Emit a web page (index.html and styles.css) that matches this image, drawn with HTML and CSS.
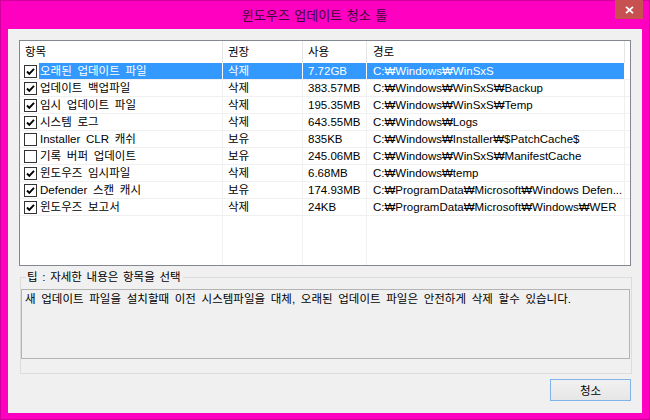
FILE: index.html
```html
<!DOCTYPE html>
<html lang="ko">
<head>
<meta charset="utf-8">
<title>윈도우즈 업데이트 청소 툴</title>
<link rel="stylesheet" href="styles.css">
</head>
<body>
<div class="window">
  <div class="titlebar">
    <div class="title">윈도우즈 업데이트 청소 툴</div>
    <div class="close">
      <svg width="9" height="8" viewBox="0 0 9 8"><path d="M1 0.8 L8 7.2 M8 0.8 L1 7.2" stroke="#fff" stroke-width="1.8" fill="none"/></svg>
    </div>
  </div>
  <div class="client">
    <div class="listview">
      <div class="row header">
        <div class="c c1">항목</div>
        <div class="c c2">권장</div>
        <div class="c c3">사용</div>
        <div class="c c4">경로</div>
      </div>
      <div class="body">
        <div class="row sel">
          <div class="c c1"><span class="cb on"></span><span class="lbl">오래된 업데이트 파일</span></div>
          <div class="c c2">삭제</div>
          <div class="c c3">7.72GB</div>
          <div class="c c4">C:₩Windows₩WinSxS</div>
        </div>
        <div class="row">
          <div class="c c1"><span class="cb on"></span><span class="lbl">업데이트 백업파일</span></div>
          <div class="c c2">삭제</div>
          <div class="c c3">383.57MB</div>
          <div class="c c4">C:₩Windows₩WinSxS₩Backup</div>
        </div>
        <div class="row">
          <div class="c c1"><span class="cb on"></span><span class="lbl">임시 업데이트 파일</span></div>
          <div class="c c2">삭제</div>
          <div class="c c3">195.35MB</div>
          <div class="c c4">C:₩Windows₩WinSxS₩Temp</div>
        </div>
        <div class="row">
          <div class="c c1"><span class="cb on"></span><span class="lbl">시스템 로그</span></div>
          <div class="c c2">삭제</div>
          <div class="c c3">643.55MB</div>
          <div class="c c4">C:₩Windows₩Logs</div>
        </div>
        <div class="row">
          <div class="c c1"><span class="cb"></span><span class="lbl">Installer CLR 캐쉬</span></div>
          <div class="c c2">보유</div>
          <div class="c c3">835KB</div>
          <div class="c c4">C:₩Windows₩Installer₩$PatchCache$</div>
        </div>
        <div class="row">
          <div class="c c1"><span class="cb"></span><span class="lbl">기록 버퍼 업데이트</span></div>
          <div class="c c2">보유</div>
          <div class="c c3">245.06MB</div>
          <div class="c c4">C:₩Windows₩WinSxS₩ManifestCache</div>
        </div>
        <div class="row">
          <div class="c c1"><span class="cb on"></span><span class="lbl">윈도우즈 임시파일</span></div>
          <div class="c c2">삭제</div>
          <div class="c c3">6.68MB</div>
          <div class="c c4">C:₩Windows₩temp</div>
        </div>
        <div class="row">
          <div class="c c1"><span class="cb on"></span><span class="lbl">Defender 스캔 캐시</span></div>
          <div class="c c2">보유</div>
          <div class="c c3">174.93MB</div>
          <div class="c c4">C:₩ProgramData₩Microsoft₩Windows Defen...</div>
        </div>
        <div class="row">
          <div class="c c1"><span class="cb on"></span><span class="lbl">윈도우즈 보고서</span></div>
          <div class="c c2">삭제</div>
          <div class="c c3">24KB</div>
          <div class="c c4">C:₩ProgramData₩Microsoft₩Windows₩WER</div>
        </div>
      </div>
    </div>
    <div class="group">
      <div class="legend">팁 : 자세한 내용은 항목을 선택</div>
      <div class="desc">새 업데이트 파일을 설치할때 이전 시스템파일을 대체, 오래된 업데이트 파일은 안전하게 삭제 할수 있습니다.</div>
    </div>
    <div class="actions">
      <button class="btn">청소</button>
    </div>
  </div>
</div>
</body>
</html>
```

FILE: styles.css
```css
html, body {
  margin: 0;
  padding: 0;
}
body {
  width: 650px;
  height: 420px;
  overflow: hidden;
  font-family: "Liberation Sans", "Noto Sans CJK KR", sans-serif;
  font-size: 11.5px;
  word-spacing: 2.5px;
  color: #000;
}
.window {
  box-sizing: border-box;
  width: 650px;
  height: 420px;
  border: 1px solid #d0009c;
  background: #ff00c0;
  display: flex;
  flex-direction: column;
}
.titlebar {
  height: 28px;
  display: flex;
  align-items: flex-start;
  flex: none;
}
.title {
  flex: 1;
  text-align: center;
  padding-left: 13px;
  font-family: "Noto Sans CJK KR", sans-serif;
  font-size: 13px;
  line-height: 28px;
  color: #3e0a36;
  word-spacing: 1px;
}
.close {
  width: 28px;
  height: 19px;
  margin-top: -1px;
  margin-right: 6px;
  background: #c75050;
  display: flex;
  align-items: center;
  justify-content: center;
}
.close svg { display: block; }
.client {
  flex: none;
  height: 384px;
  margin: 0 7px 0 7px;
  box-sizing: border-box;
  background: #f0f0f0;
  padding: 11px 11px 0 11px;
  display: flex;
  flex-direction: column;
}
.listview {
  box-sizing: border-box;
  height: 226px;
  border: 1px solid #828790;
  background: #fff;
  display: flex;
  flex-direction: column;
  flex: none;
}
.row {
  display: flex;
  height: 17px;
  box-sizing: border-box;
  border-bottom: 1px solid #f0f0f0;
  line-height: 16px;
}
.row.header {
  height: 22px;
  line-height: 22px;
  border-bottom: none;
  flex: none;
}
.c {
  box-sizing: border-box;
  border-right: 1px solid #e5e5e5;
  white-space: nowrap;
  overflow: hidden;
  text-overflow: ellipsis;
  padding-left: 5px;
}
.row .c { border-right-color: #f0f0f0; }
.row.header .c { border-right-color: #e5e5e5; }
.c1 { width: 203px; }
.c2 { width: 80px; }
.c3 { width: 64px; }
.c4 { width: 258px; padding-left: 6px; word-spacing: 0; }
.body {
  flex: 1;
  background-image:
    linear-gradient(#f0f0f0, #f0f0f0),
    linear-gradient(#f0f0f0, #f0f0f0),
    linear-gradient(#f0f0f0, #f0f0f0),
    linear-gradient(#f0f0f0, #f0f0f0);
  background-size: 1px 100%;
  background-repeat: no-repeat;
  background-position: 202px 0, 282px 0, 346px 0, 604px 0;
}
.body .c1 {
  display: flex;
  align-items: center;
  padding-left: 4px;
}
.cb {
  width: 13px;
  height: 13px;
  box-sizing: border-box;
  border: 1px solid #333;
  background: #fff;
  flex: none;
  margin-right: 2px;
}
.cb.on {
  background: #fff url("data:image/svg+xml;utf8,<svg xmlns='http://www.w3.org/2000/svg' width='11' height='11' viewBox='0 0 11 11'><path d='M2 5.5 L4.3 7.8 L9 2.8' stroke='black' stroke-width='1.9' fill='none'/></svg>") no-repeat center;
}
.lbl {
  flex: 1;
  padding-left: 1px;
  line-height: 16px;
  height: 16px;
  overflow: hidden;
}
.row.sel .lbl,
.row.sel .c2,
.row.sel .c3,
.row.sel .c4 {
  background: #3399ff;
  color: #fff;
}
.row.sel .c { border-right-color: #fff; }
.group {
  flex: none;
  box-sizing: border-box;
  height: 97px;
  margin: 11px -1px 0 1px;
  border: 1px solid #dcdcdc;
  padding: 0 1px 0 0;
  display: flex;
  flex-direction: column;
}
.legend {
  align-self: flex-start;
  margin: -8px 0 0 5px;
  padding: 0 2px 0 1px;
  background: #f0f0f0;
  line-height: 15px;
  height: 15px;
  word-spacing: 1.5px;
}
.desc {
  box-sizing: border-box;
  height: 70px;
  margin-top: 4px;
  border: 1px solid #b4b4b4;
  background: #f0f0f0;
  padding: 1px 3px;
  line-height: 16px;
}
.actions {
  display: flex;
  justify-content: flex-end;
  margin-top: 5px;
}
.btn {
  width: 81px;
  height: 22px;
  box-sizing: border-box;
  border: 1px solid #7eb4ea;
  background: linear-gradient(#f1f1f1, #e6e6e6);
  font-family: "Noto Sans CJK KR", sans-serif;
  font-size: 11.5px;
  color: #000;
  padding: 0;
  margin: 0;
  line-height: 18px;
}
```
